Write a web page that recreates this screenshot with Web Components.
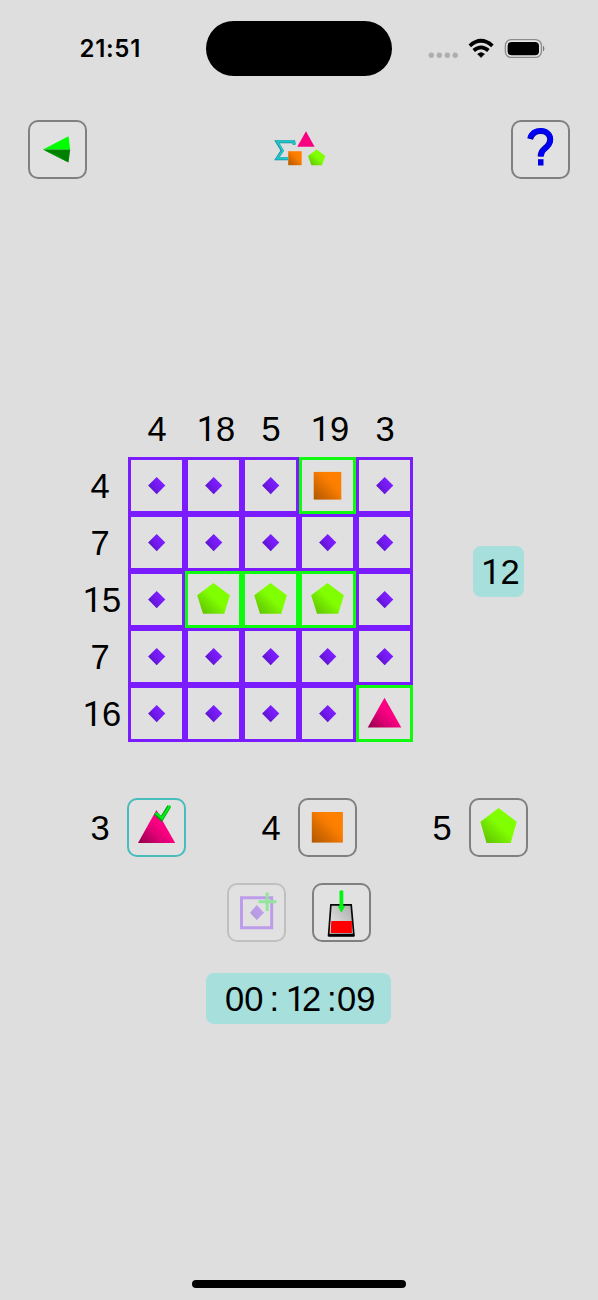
<!DOCTYPE html>
<html lang="en">
<head>
<meta charset="utf-8">
<title>Shape Sums</title>
<style>
html,body{margin:0;padding:0;background:#dedede}
</style>
</head>
<body>
<puzzle-app></puzzle-app>
<script>
const define = (name, html, render) => {
  const t = document.createElement('template');
  t.innerHTML = html;
  customElements.define(name, class extends HTMLElement {
    constructor() {
      super();
      this.attachShadow({mode: 'open'}).appendChild(t.content.cloneNode(true));
    }
    connectedCallback() { if (render) render(this, this.shadowRoot); }
  });
};

const DEFS = `<defs>
<linearGradient id="o" x1="0" y1="1" x2="1" y2="0"><stop offset="0" stop-color="#b05800"/><stop offset=".3" stop-color="#d46900"/><stop offset=".56" stop-color="#f67b00"/><stop offset=".7" stop-color="#ff8000"/></linearGradient>
<linearGradient id="g" x1="0" y1="1" x2="1" y2="0"><stop offset="0" stop-color="#5cb900"/><stop offset=".36" stop-color="#74e800"/><stop offset=".52" stop-color="#80ff00"/></linearGradient>
<linearGradient id="p" x1=".1" y1="1" x2=".75" y2=".4"><stop offset="0" stop-color="#990050"/><stop offset=".5" stop-color="#df0074"/><stop offset=".8" stop-color="#fb0082"/></linearGradient>
<linearGradient id="v" x1=".2" y1=".8" x2=".8" y2=".4"><stop offset="0" stop-color="#5b15c6"/><stop offset=".5" stop-color="#7219ee"/><stop offset="1" stop-color="#7d1dff"/></linearGradient>
<linearGradient id="s" x1="0" y1="1" x2="1" y2="0"><stop offset="0" stop-color="#eee"/><stop offset="1" stop-color="#aaa"/></linearGradient>
</defs>`;

// Each glyph is drawn in a 57-unit square.
const GLYPHS = {
  diamond: '<path d="M28.7 20L37.3 28.6L28.7 37.2L20.1 28.6Z" fill="url(#v)"/>',
  square: '<path d="M14.7 14.9H42.3V42.6H14.7Z" fill="url(#o)"/>',
  pentagon: '<path d="M28.5 11.9L44.9 24.3L39.3 42.8H18L12.2 24.3Z" fill="url(#g)"/>',
  triangle: '<path d="M28.5 12.7L45.3 42.4H11.7Z" fill="url(#p)"/>',
  bigsquare: '<path d="M12.8 13H43.9V43.6H12.8Z" fill="url(#o)"/>',
  bigpentagon: '<path d="M28.6 9L46.7 22.7L40.7 44H16.5L10.4 22.7Z" fill="url(#g)"/>',
  picked: '<path d="M28.4 11L47.2 43.9H10L28.4 11Z" fill="url(#p)"/><path d="M27.3 14.3L33.5 19.9L41.2 7.3" fill="none" stroke="#009a0c" stroke-width="4"/><path d="M28.3 14.5L34 19.2L41.6 7.1" fill="none" stroke="#00ee16" stroke-width="2.3" stroke-linecap="round"/>',
  back: '<path d="M14 28.5L39.5 15.2L41.2 28.5Z" fill="#00ff00"/><path d="M14 28.5H41.2L39.5 41.5Z" fill="#008000"/><path d="M14 28.5L39.5 41.5L28 34Z" fill="#009900"/>',
  help: '<path d="M18.1 18C19.8 12.2 24.3 10 28.5 10C34.4 10 38.2 13.8 38.2 18.6C38.2 23.2 35.4 25.6 32.2 28C29.5 30.2 28.7 31.6 28.7 35.4" fill="none" stroke="#0000bd" stroke-width="6"/><path d="M17.6 16.5C19.9 11.4 24.4 9.4 28.5 9.4C34.6 9.4 38.8 13.4 38.8 18.5C38.8 23.3 35.8 25.8 32.5 28.4C29.9 30.5 29.2 31.9 29.2 35.4" fill="none" stroke="#0000fa" stroke-width="4.4"/><path d="M26 38.2H31.5V44.5H26Z" fill="#0000e4"/>',
  addcell: '<path d="M13.5 13.7H43.7V43.7H13.5Z" fill="none" stroke="#791aff" stroke-width="3"/><path d="M28.8 21L36 28.8L28.8 36L22 28.8Z" fill="url(#v)"/><path d="M39.2 8.5V27M30.5 17.7H48.5" fill="none" stroke="#00ee20" stroke-width="3"/>',
  glass: '<path d="M19 21L38 21L40.5 51H16.5Z" fill="url(#s)"/><path d="M18.3 37H38.9V49H17.6Z" fill="#ff0000"/><path d="M17.9 20.8H38.2L40.9 51.4H15.6Z" fill="none" stroke="#080808" stroke-width="1.7"/><path d="M15.4 51.2H41.2" stroke="#000" stroke-width="3"/><path d="M26.5 7Q28.4 5.7 30.3 7V22.3H32.2L28.4 28.8L24.8 22.3H26.5Z" fill="#00f513"/>'
};

define('shape-glyph', `<style>:host{display:block;width:57px;height:57px}svg{display:block;width:57px;height:57px}</style><div></div>`,
  (el, r) => { r.querySelector('div').innerHTML = `<svg viewBox="0 0 57 57">${DEFS}${GLYPHS[el.getAttribute('kind')]}</svg>`; });

define('puzzle-button', `<style>
:host{display:flex;align-items:center;justify-content:center;width:59px;height:59px;box-sizing:border-box;border:2px solid #808080;border-radius:10px;background:#e1e1e1;flex:none}
:host([selected]){border-color:#46bcbc}
:host([disabled]){border-color:#c0c0c0}
:host([disabled]) slot{opacity:.34;display:block}
</style><slot></slot>`);

// The digit 1 is set in a face that draws it without a foot.
const ONE = 'i{font-style:normal;font-family:Roboto,sans-serif}';
const digits = s => s.replace(/1/g, '<i>1</i>');

define('sum-number', `<style>
:host{display:flex;align-items:center;justify-content:center;width:57px;height:57px;font:34.5px/38px "Liberation Sans",Arial,sans-serif;color:#000;box-sizing:border-box;padding:0 0 0 1px}
:host([wide]){padding-left:5px}
${ONE}
</style><span></span>`,
  (el, r) => { r.querySelector('span').innerHTML = digits(el.getAttribute('value')); });

define('board-cell', `<style>
:host{display:flex;align-items:center;justify-content:center;width:57px;height:57px;box-sizing:border-box;border:3px solid #7b1cff;background:#e0e0e0}
:host([filled]){border-color:#10fa10}
shape-glyph{flex:none}
</style><shape-glyph></shape-glyph>`,
  (el, r) => {
    const k = el.getAttribute('kind');
    if (k !== 'diamond') el.setAttribute('filled', '');
    const old = r.querySelector('shape-glyph');
    const g = document.createElement('shape-glyph');
    g.setAttribute('kind', k);
    old.replaceWith(g);
  });

define('puzzle-board', `<style>
:host{display:block}
div{display:grid;grid-template-columns:repeat(6,57px);grid-auto-rows:57px}
</style><div></div>`,
  (el, r) => {
    const num = n => `<sum-number value="${n}" ${n.length > 1 ? 'wide' : ''}></sum-number>`;
    const kinds = {d: 'diamond', s: 'square', p: 'pentagon', t: 'triangle'};
    const rows = ['dddsd', 'ddddd', 'dpppd', 'ddddd', 'ddddt'];
    const sums = ['4', '7', '15', '7', '16'];
    r.querySelector('div').innerHTML = '<span></span>' + ['4', '18', '5', '19', '3'].map(num).join('') +
      rows.map((row, i) => num(sums[i]) + [...row].map(c => `<board-cell kind="${kinds[c]}"></board-cell>`).join('')).join('');
  });

define('score-badge', `<style>
:host{display:flex;align-items:center;justify-content:center;width:51px;height:51px;box-sizing:border-box;padding:0 0 0 4px;border-radius:8px;background:#a6dfdc;font:34.5px/38px "Liberation Sans",Arial,sans-serif;color:#000}
${ONE}
</style><span></span>`,
  (el, r) => { r.querySelector('span').innerHTML = digits(el.getAttribute('value')); });

define('game-timer', `<style>
:host{display:grid;grid-template-columns:44.5px 16.5px 41px 10px 42px;justify-content:start;align-items:center;width:185px;height:51px;box-sizing:border-box;padding:0 0 0 19px;border-radius:8px;background:#a6dfdc;font:34.5px/38px "Liberation Sans",Arial,sans-serif;color:#000}
.m{letter-spacing:-3.5px}
${ONE}
</style><span>00</span><span>:</span><span class="m"><i>1</i>2</span><span>:</span><span>09</span>`);

define('status-bar', `<style>
:host{display:grid;grid-template-columns:206px 186px 206px;height:55px;padding-top:21px}
.time{font:600 24px/28px Inter,sans-serif;color:#000;padding:14px 0 0 79.5px;letter-spacing:.7px}
.island{background:#000;border-radius:28px;height:55px}
svg{display:block}
</style>
<div class="time">21:51</div><div class="island"></div>
<svg width="206" height="55" viewBox="392 21 206 55">
<g fill="#aeaeae"><circle cx="431.3" cy="55.2" r="2.7"/><circle cx="439.3" cy="55.2" r="2.7"/><circle cx="447.3" cy="55.2" r="2.7"/><circle cx="455.2" cy="55.2" r="2.7"/></g>
<g fill="none" stroke="#000" stroke-width="3.7"><path d="M469.8 45.8Q481 35.8 492.4 45.8"/><path d="M473.7 50.5Q481 44.1 488.4 50.5"/></g>
<path d="M477.6 54Q481 51 484.5 54L481 57.5Z" stroke="#000" stroke-width=".6"/>
<rect x="505.4" y="39.6" width="36" height="17.8" rx="6" fill="#e6e6e6" stroke="#8b8b8b" stroke-width="1.4"/>
<rect x="507.6" y="41.9" width="31.4" height="13.3" rx="4"/>
<path d="M543 45.4Q545.8 48.5 543 51.6Z" fill="#777"/>
</svg>`);

define('app-logo', `<style>:host{display:block}svg{display:block}</style>
<svg width="54" height="40" viewBox="272 129 54 40">${DEFS}
<path d="M294.3 143.8L293.8 140.8H276.9L282.2 149.6L276.9 157.8H288" fill="none" stroke="#178f96" stroke-width="3"/>
<path d="M294.3 143.2L293.8 140.4H277.2L282.8 149.6L277.2 157.4H288" fill="none" stroke="#20c5ce" stroke-width="2"/>
<path d="M306 130.3L314.6 145.7H297.3Z" fill="#f8007f"/>
<path d="M288.2 150.2H301.7V164.2H288.2Z" fill="url(#o)"/>
<path d="M316.7 148.5L325.4 155L321.9 164.3H311.4L308 155Z" fill="url(#g)"/>
</svg>`);

define('puzzle-app', `<style>
:host{display:flex;flex-direction:column;width:598px;height:1300px;background:#dedede;overflow:hidden}
header{display:flex;justify-content:space-between;align-items:center;margin:44px 28px 0;height:59px}
.play{display:flex;margin:221px 0 0 71px;height:342px}
score-badge{margin:146px 0 0 60px}
.choices{display:grid;grid-template-columns:repeat(8,57px);margin:56px 0 0 71px;height:59px;align-items:center;justify-items:center}
.choices :nth-child(3){grid-column:4}
.choices :nth-child(5){grid-column:7}
.tools{display:flex;gap:26px;margin:26px 0 0 227px}
game-timer{margin:31px 0 0 206px}
footer{margin:auto auto 12px;width:214px;height:8px;border-radius:4px;background:#000}
</style>
<status-bar></status-bar>
<header>
<puzzle-button><shape-glyph kind="back"></shape-glyph></puzzle-button>
<app-logo></app-logo>
<puzzle-button><shape-glyph kind="help"></shape-glyph></puzzle-button>
</header>
<div class="play"><puzzle-board></puzzle-board><score-badge value="12"></score-badge></div>
<div class="choices">
<sum-number value="3"></sum-number><puzzle-button selected><shape-glyph kind="picked"></shape-glyph></puzzle-button>
<sum-number value="4"></sum-number><puzzle-button><shape-glyph kind="bigsquare"></shape-glyph></puzzle-button>
<sum-number value="5"></sum-number><puzzle-button><shape-glyph kind="bigpentagon"></shape-glyph></puzzle-button>
</div>
<div class="tools">
<puzzle-button disabled><shape-glyph kind="addcell"></shape-glyph></puzzle-button>
<puzzle-button><shape-glyph kind="glass"></shape-glyph></puzzle-button>
</div>
<game-timer></game-timer>
<footer></footer>`);
</script>
</body>
</html>
